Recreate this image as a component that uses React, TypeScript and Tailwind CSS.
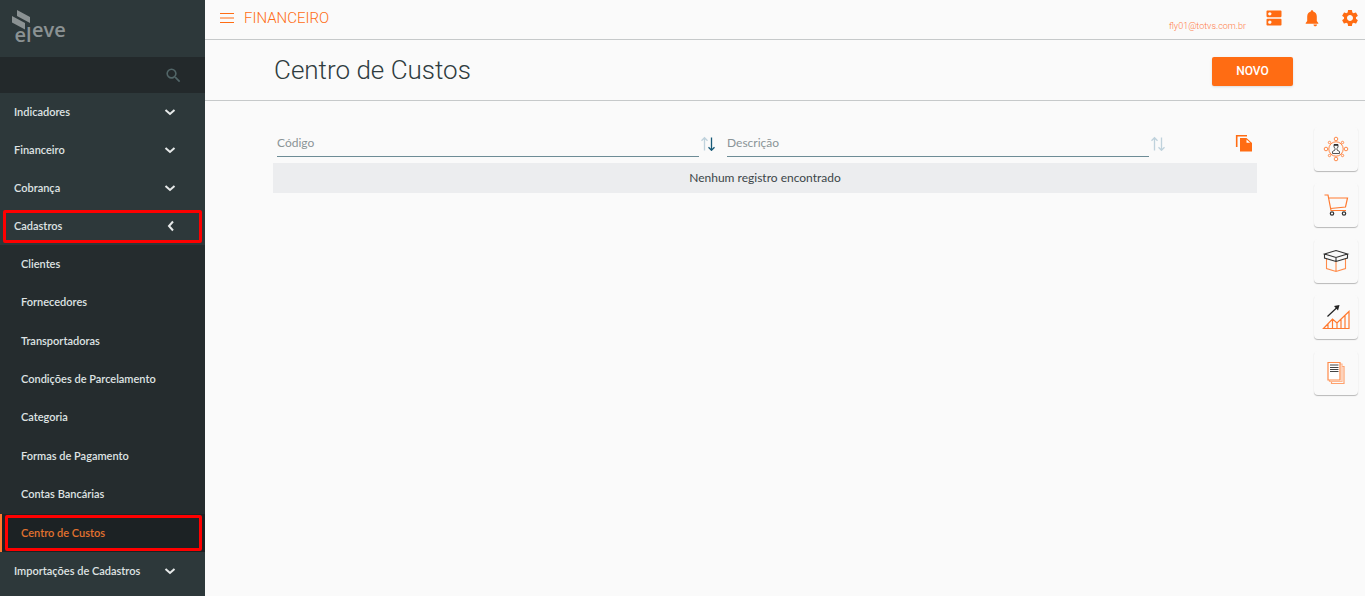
import React from "react";
import { MdDns, MdSearch, MdSettings } from "react-icons/md";

const menuTop = ["Indicadores", "Financeiro", "Cobrança"];

const cadastros = [
  "Clientes",
  "Fornecedores",
  "Transportadoras",
  "Condições de Parcelamento",
  "Categoria",
  "Formas de Pagamento",
  "Contas Bancárias",
  "Centro de Custos",
];

const Logo = () => (
  <svg width="60" height="44" viewBox="0 0 60 44" className="font-['Open_Sans',sans-serif] text-[#8b9293]" role="img" aria-label="eleve">
    <path d="M6 1L19 8V14L6 7Z M1 7L14 14V20.500L1 13.500Z" fill="currentColor" />
    <text x="3.500" y="33" fontSize="20" fontWeight="600" fill="currentColor">el</text>
    <text x="21" y="28" fontSize="20" fontWeight="600" fill="currentColor">eve</text>
  </svg>
);

const Chevron = ({ open = false }: { open?: boolean }) => (
  <svg width="12" height="12" viewBox="0 0 12 12" fill="none" stroke="#e6e9e9" strokeWidth="2">
    <path d={open ? "M9 1.500L5 6L9 10.500" : "M1.500 4L6 8L10.500 4"} />
  </svg>
);

const MenuItem = ({ label, open = false }: { label: string; open?: boolean }) => (
  <button
    type="button"
    aria-expanded={open}
    className="flex h-[38px] w-full items-center justify-between pr-[29px] pl-[14px] text-left"
  >
    <span>{label}</span>
    <Chevron open={open} />
  </button>
);

const Bell = () => (
  <svg width="20" height="20" viewBox="0 0 20 20" fill="currentColor">
    <path d="M10 2.200C10.700 2.200 11.200 2.700 11.200 3.400C13.500 4 14.800 6 14.800 8.500V13L16.300 15V15.800H3.700V15L5.200 13V8.500C5.200 6 6.500 4 8.800 3.400C8.800 2.700 9.300 2.200 10 2.200Z" />
    <path d="M11.500 16.500H15C15 17.600 14.200 18.300 13.300 18.300C12.300 18.300 11.500 17.600 11.500 16.500Z" />
  </svg>
);

const SortArrows = ({ active = false }: { active?: boolean }) => (
  <svg width="16" height="16" viewBox="0 0 16 16" fill="none" strokeWidth="1.300">
    <path d="M3.500 15.500V3M0.500 5.700L3.500 2.700L6.500 5.700" stroke="#bfd2dc" />
    <path d="M10.500 2.500V15M7.500 12.300L10.500 15.300L13.500 12.300" stroke={active ? "#175a78" : "#bfd2dc"} />
  </svg>
);

const CopyIcon = () => (
  <svg width="18" height="18" viewBox="0 0 18 18">
    <path d="M1.700 13V1.700H12" fill="none" stroke="#ff6c13" strokeWidth="1.600" />
    <path d="M5 4H11.500L17 9V17.500H5Z" fill="#ff6c13" />
    <path d="M11.500 5.500V8.700H15.200Z" fill="#fff" />
  </svg>
);

const NetworkIcon = () => (
  <svg width="28" height="28" viewBox="0 0 28 28" fill="none" stroke="#ff8a4a">
    <circle cx="14" cy="14" r="7.200" />
    <circle cx="14" cy="4" r="1.800" />
    <circle cx="14" cy="24" r="1.800" />
    <circle cx="4" cy="14" r="1.800" />
    <circle cx="24" cy="14" r="1.800" />
    <circle cx="7.500" cy="7.500" r="1.200" />
    <circle cx="20.500" cy="7.500" r="1.200" />
    <circle cx="7.500" cy="20.500" r="1.200" />
    <circle cx="20.500" cy="20.500" r="1.200" />
    <path d="M12 9.500H16V12L15 13.500V15L17.500 16.500V18.500H10.500V16.500L13 15V13.500L12 12Z" stroke="#555" />
    <path d="M12 10H16" stroke="#222" strokeWidth="1.500" />
  </svg>
);

const CartIcon = () => (
  <svg width="28" height="28" viewBox="0 0 28 28" fill="none" stroke="#ff7a30" strokeWidth="1.200">
    <path d="M2.500 4H6L9 19.500H24M6.500 7H25.500L23.500 16L8.500 17.500" />
    <circle cx="10" cy="22.500" r="1.700" stroke="#333" />
    <circle cx="22" cy="22.500" r="1.700" stroke="#333" />
  </svg>
);

const BoxIcon = () => (
  <svg width="28" height="28" viewBox="0 0 28 28" fill="none" stroke="#333" strokeWidth="1.100">
    <path d="M4.500 12V21.500L14 24.500L23.500 21.500V12M14 14V24.500" stroke="#ff8b4a" />
    <path d="M2.500 7L14 3.500L25.500 7L14 10.500ZM2.500 7V11L14 14.500L25.500 11V7M14 10.500V14.500" />
  </svg>
);

const ChartIcon = () => (
  <svg width="28" height="28" viewBox="0 0 28 28" fill="none" stroke="#ff7a30" strokeWidth="1.200">
    <path d="M1.500 25.500L10.500 16L15 20L27 8.500V25.500ZM6 21V25M10.500 16V25M15 20V25M19 16.500V25M23 12.500V25" />
    <path d="M5.500 13.500L15 4.500" stroke="#222" />
    <path d="M12 3L17.500 2L16 7.500Z" fill="#222" stroke="none" />
  </svg>
);

const DocsIcon = () => (
  <svg width="28" height="28" viewBox="0 0 28 28" fill="none" stroke="#ff8b4a">
    <path d="M9.500 22.500V24.500H22V7.500H20" stroke="#ffa26e" strokeWidth="1.200" />
    <path d="M7.500 21V22.500H20V5H18" stroke="#ffb891" strokeWidth="1.200" />
    <path d="M6 3.500H18V21H6Z" fill="#fff" strokeWidth="1.200" />
    <path d="M8 6H16.500M8 8.500H16.500M8 10.500H16.500M8 12.500H16.500" stroke="#444" />
  </svg>
);

const shortcuts = [
  { label: "Clientes", icon: NetworkIcon },
  { label: "Compras", icon: CartIcon },
  { label: "Produtos", icon: BoxIcon },
  { label: "Indicadores", icon: ChartIcon },
  { label: "Documentos", icon: DocsIcon },
];

const Sidebar = () => (
  <aside className="w-[205px] shrink-0 bg-[#2d383a] font-['Lato',sans-serif] text-[11px] font-semibold text-[#dfe3e3]">
    <div className="h-[57px] pt-[9px] pl-[11px]">
      <Logo />
    </div>
    <div className="flex h-9 items-center bg-[#23292b] pr-[22px] pl-[14px]">
      <input type="search" aria-label="Pesquisar" className="min-w-0 flex-1 bg-transparent outline-none" />
      <button type="button" aria-label="Buscar">
        <MdSearch className="h-[19px] w-[19px] text-[#526668]" />
      </button>
    </div>
    <nav>
      {menuTop.map((label) => (
        <MenuItem key={label} label={label} />
      ))}
      <div className="relative">
        <MenuItem label="Cadastros" open />
        <span className="pointer-events-none absolute inset-x-[3px] top-[3px] bottom-[2px] rounded-xs border-3 border-[#ff0000]" />
      </div>
      <ul className="flex h-[307px] flex-col justify-between bg-[#252c2e]">
        {cadastros.map((label) => {
          const active = label === "Centro de Custos";
          return (
            <li key={label} className="relative">
              <a
                href="#"
                className={`flex h-[38px] items-center ${active ? "border-l-2 border-[#ff7a30] bg-[#1c2224] pl-[19px] text-[#e2722f]" : "pl-[21px]"}`}
              >
                {label}
              </a>
              {active && (
                <span className="pointer-events-none absolute inset-y-px right-[3px] left-[5px] rounded-xs border-3 border-[#ff0000]" />
              )}
            </li>
          );
        })}
      </ul>
      <MenuItem label="Importações de Cadastros" />
    </nav>
  </aside>
);

const Header = () => (
  <header className="flex h-10 items-center justify-between border-b border-[#c6c9ca] pr-[5px] pb-[3px] pl-[15px] text-[#ff6c13]">
    <div className="flex items-center gap-[10px]">
      <button type="button" aria-label="Menu">
        <svg width="14" height="12" viewBox="0 0 14 12" stroke="currentColor">
          <path d="M0 1.500H14M0 6H14M0 10.500H14" />
        </svg>
      </button>
      <span className="text-[15px] leading-5 font-light">FINANCEIRO</span>
    </div>
    <div className="flex items-center gap-[18px]">
      <span className="pt-[18px] text-[9px] font-light text-[#ff7a45]">fly01@totvs.com.br</span>
      <button type="button" aria-label="Aplicativos">
        <MdDns className="h-5 w-5" />
      </button>
      <button type="button" aria-label="Notificações">
        <Bell />
      </button>
      <button type="button" aria-label="Configurações">
        <MdSettings className="h-5 w-5" />
      </button>
    </div>
  </header>
);

const FilterCell = ({ label, active = false }: { label: string; active?: boolean }) => (
  <th className="pb-[6px] pl-1 align-bottom">
    <div className="flex items-center gap-[2px]">
      <input
        type="text"
        aria-label={label}
        placeholder={label}
        className="h-[29px] min-w-0 flex-1 border-b border-[#6d8c96] bg-transparent font-normal outline-none placeholder:text-[#8a9497]"
      />
      <button type="button" aria-label={`Ordenar por ${label}`} className="mr-[6px]">
        <SortArrows active={active} />
      </button>
    </div>
  </th>
);

const App = () => {
  return (
    <div className="flex min-h-screen bg-[#fafafa] font-['Roboto',sans-serif]">
      <Sidebar />
      <div className="min-w-0 flex-1">
        <Header />
        <div className="flex h-[61px] items-center justify-between border-b border-[#c6c9ca] pr-[72px] pl-[69px]">
          <h1 className="text-[26px] leading-9 font-light text-[#2f3c40]">Centro de Custos</h1>
          <button
            type="button"
            className="mt-[2px] h-[29px] w-[81px] rounded-xs bg-[#ff6c13] text-[12px] font-medium text-white shadow-sm"
          >
            NOVO
          </button>
        </div>

        <div className="flex items-start gap-[57px] pt-[26px] pr-[7px] pl-[68px]">
          <main className="min-w-0 flex-1 pt-px">
            <table className="w-full table-fixed border-collapse font-['Lato',sans-serif] text-[12px]">
              <thead>
                <tr>
                  <FilterCell label="Código" active />
                  <FilterCell label="Descrição" />
                  <th className="w-[84px] pr-1 pb-[6px] text-right">
                    <button type="button" aria-label="Copiar" className="align-middle">
                      <CopyIcon />
                    </button>
                  </th>
                </tr>
              </thead>
              <tbody>
                <tr className="bg-[#ecedef]">
                  <td colSpan={3} className="h-[30px] text-center text-[#3c4649]">
                    Nenhum registro encontrado
                  </td>
                </tr>
              </tbody>
            </table>
          </main>

          <div className="flex flex-col gap-3">
            {shortcuts.map(({ label, icon: Icon }) => (
              <button
                key={label}
                type="button"
                aria-label={label}
                className="flex h-11 w-11 items-center justify-center rounded-sm bg-[#fafafa] shadow-[0_1px_1px_#0004]"
              >
                <Icon />
              </button>
            ))}
          </div>
        </div>
      </div>
    </div>
  );
};

export default App;
